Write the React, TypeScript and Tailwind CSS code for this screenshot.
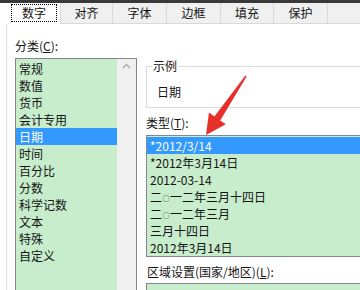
import React from "react";

const FONT = "[font-family:'Microsoft_YaHei','Noto_Sans_CJK_SC',sans-serif]";

const tabs = [
  { label: "对齐", w: "w-[52px]" },
  { label: "字体", w: "w-[54px]" },
  { label: "边框", w: "w-[54px]" },
  { label: "填充", w: "w-[53px]" },
  { label: "保护", w: "w-[54px]" },
];

const cats = ["常规", "数值", "货币", "会计专用", "日期", "时间", "百分比", "分数", "科学记数", "文本", "特殊", "自定义"];
const types = ["*2012/3/14", "*2012年3月14日", "2012-03-14", "二○一二年三月十四日", "二○一二年三月", "三月十四日", "2012年3月14日"];

function renderType(t: string) {
  if (!t.includes("○")) return t;
  const parts = t.split("○");
  return (
    <>
      {parts[0]}
      <span className="inline-block text-[7px] leading-[7px] mx-[0.5px] align-middle">○</span>
      {parts[1]}
    </>
  );
}

export default function App() {
  return (
    <div className={`relative w-[360px] h-[290px] overflow-hidden bg-white text-[12px] leading-[16px] text-[#141414] ${FONT}`}>
      <div className="h-[3px] bg-[#3a3a3a]" />
      {/* tab strip */}
      <div className="flex h-[21px]">
        <div className="w-[10px] bg-white" />
        <div className="w-[51px] h-[21px] bg-white border-r border-[#d9d9d9] pl-[1px] pt-[1px]">
          <div className="w-[46px] h-[18px] border border-dotted border-black flex items-center justify-center">数字</div>
        </div>
        {tabs.map((t) => (
          <div key={t.label} className={`${t.w} h-[21px] bg-[#f0f0f0] border-r border-b border-[#d9d9d9] flex items-center justify-center`}>
            {t.label}
          </div>
        ))}
        <div className="flex-1 h-[21px] bg-[#f0f0f0] border-b border-[#d9d9d9]" />
      </div>
      {/* content */}
      <div className="flex ml-[6px] border-l border-[#dedede] h-[266px]">
        {/* left column */}
        <div className="pl-[8px] w-[139px] shrink-0">
          <div className="mt-[14px]">
            分类(<span className="underline">C</span>):
          </div>
          <div className="mt-[4px] w-[122px] h-[240px] border border-[#828790] flex">
            <div className="w-[101px] bg-[#c7edcc] pt-[1px]">
              {cats.map((c) => (
                <div
                  key={c}
                  className={`h-[17px] pl-[3px] flex items-center ${c === "日期" ? "bg-[#3399ff] text-white" : ""}`}
                >
                  {c}
                </div>
              ))}
            </div>
            <div className="flex-1 bg-[#f0f0f0] flex justify-center pt-[4px]">
              <svg width="9" height="6" viewBox="0 0 9 6">
                <path d="M1 5 L4.5 1.5 L8 5" fill="none" stroke="#a6a6a6" strokeWidth="1.3" />
              </svg>
            </div>
          </div>
        </div>
        {/* right column */}
        <div className="flex-1">
          <fieldset className="mt-[34px] border border-[#dcdcdc] h-[50px] w-[240px] pl-[10px]">
            <legend className="ml-[-5px] px-[1px] leading-[16px]">示例</legend>
            <div className="mt-[10px]">日期</div>
          </fieldset>
          <div className="mt-[7px]">
            类型(<span className="underline">T</span>):
          </div>
          <div className="mt-[4px] w-[240px] border border-[#828790] bg-[#c7edcc] pt-[1px]">
            {types.map((t, i) => (
              <div key={t} className={`h-[17px] pl-[3px] flex items-center ${i === 0 ? "bg-[#3399ff] text-white" : ""}`}>
                <span>{renderType(t)}</span>
              </div>
            ))}
          </div>
          <div className="mt-[7px] pl-[1px]">
            区域设置(国家/地区)(<span className="underline">L</span>):
          </div>
          <div className="mt-[3px] w-[240px] h-[30px] border border-[#828790] bg-[#c7edcc]" />
        </div>
      </div>
      {/* red annotation arrow */}
      <svg className="absolute left-0 top-0 pointer-events-none" width="360" height="290" viewBox="0 0 360 290">
        <polygon
          points="246.6,76.4 220.2,120.4 225.8,124.2 206,135 209,112.6 214.4,116.4 245.4,75.6"
          fill="#e8302a"
        />
      </svg>
    </div>
  );
}
